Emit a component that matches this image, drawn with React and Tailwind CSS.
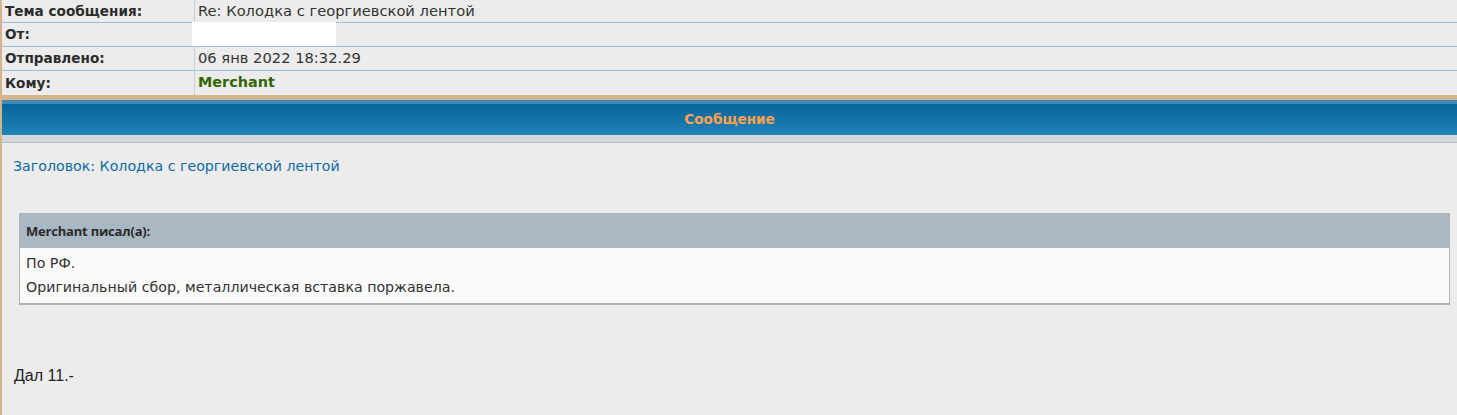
import React from "react";

const rows = [
  { label: "Тема сообщения:", value: "Re: Колодка с георгиевской лентой" },
  { label: "От:", value: "", hidden: true },
  { label: "Отправлено:", value: "06 янв 2022 18:32.29" },
  { label: "Кому:", value: "Merchant", user: true },
];

const App = () => {
  return (
    <div className="h-[415px] bg-[#ececec] border-l-2 border-[#d3b48c] text-[#333] font-['Verdana','DejaVu_Sans',sans-serif] overflow-hidden">
      {/* Message header table */}
      <div className="flex flex-col">
        {rows.map((row, i) => (
          <div
            key={i}
            className={`grid grid-cols-[193px_1fr] ${i === 0 ? "h-[23px]" : "h-[24px]"} ${i < rows.length - 1 ? "border-b border-[#a7bccd]" : ""}`}
          >
            <div className="border-r border-[#c9ced4] pl-[3px] flex items-center text-[13.6px] font-bold text-[#2c2c2c]">
              {row.label}
            </div>
            <div className="relative pl-[3px] flex items-center text-[14.7px]">
              {row.hidden && (
                <div className="absolute left-[-3px] top-[-1px] w-[144px] h-[24px] bg-white"></div>
              )}
              {row.user ? (
                <span className="font-bold text-[#336600] text-[14.4px]">{row.value}</span>
              ) : (
                <span>{row.value}</span>
              )}
            </div>
          </div>
        ))}
      </div>

      {/* Section header */}
      <div className="h-[5px] bg-[#d3b48c]"></div>
      <div className="h-[4px] bg-[#3f8ab4]"></div>
      <div className="h-[31px] bg-[linear-gradient(to_bottom,#05659c,#2283b7)] flex items-center justify-center">
        <span className="text-[13.6px] font-bold text-[#ffa24e]">Сообщение</span>
      </div>
      <div className="h-[8px] bg-[#d4d8dc] border-b border-[#aebdca]"></div>

      {/* Body */}
      <div className="pl-[11px] pt-[13px] text-[14.2px] text-[#0f6aa2]">
        Заголовок: Колодка с георгиевской лентой
      </div>

      <div className="ml-[17px] mr-[7px] mt-[36px] border border-[#a9b6c0] border-b-2">
        <div className="h-[34px] bg-[#a9b8c3] flex items-center pl-[6px] text-[13px] font-bold text-[#2a2a2a] font-['Open_Sans',sans-serif] tracking-[-0.2px]">
          Merchant писал(а):
        </div>
        <div className="bg-[#fafafa] px-[6px] pt-[3px] pb-[4px] text-[14.2px] leading-[24px] text-[#333]">
          <div>По РФ.</div>
          <div>Оригинальный сбор, металлическая вставка поржавела.</div>
        </div>
      </div>

      <div className="pl-[12px] pt-[59px] text-[16px] text-[#222] font-['Liberation_Sans',Arial,sans-serif]">
        Дал 11.-
      </div>
    </div>
  );
};

export default App;
